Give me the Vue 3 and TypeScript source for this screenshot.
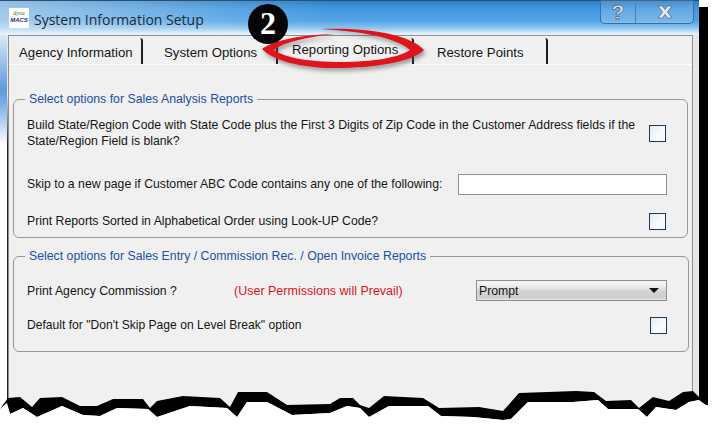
<template>
  <div class="page">
    <div class="screen">
      <div class="window">
        <!-- Title bar -->
        <header class="titlebar">
          <div class="logo">
            <span class="logo-top">dyna</span>
            <span class="logo-bottom">MACS</span>
          </div>
          <span class="title">System Information Setup</span>
          <div class="controls">
            <span class="ctrl ctrl-help">?</span>
            <span class="ctrl ctrl-close">
              <svg width="16" height="14" viewBox="0 0 16 14">
                <path
                  d="M1 1h4.500L8 4.600 10.500 1H15l-4.600 6L15 13h-4.500L8 9.400 5.500 13H1l4.600-6z"
                  fill="#dfe8ee"
                  stroke="#5b6f80"
                  stroke-width="0.8"
                />
              </svg>
            </span>
          </div>
        </header>

        <div class="body">
          <div class="frame-left"></div>
          <main class="panel">
            <!-- Tabs -->
            <nav class="tabs">
              <div
                v-for="tab in tabs"
                :key="tab.label"
                class="tab"
                :class="{ active: tab.active }"
                :style="{ width: tab.width + 'px', paddingLeft: tab.inset + 'px' }"
              >
                {{ tab.label }}
              </div>
            </nav>

            <div class="content">
              <fieldset class="group group-sales">
                <legend>Select options for Sales Analysis Reports</legend>
                <div class="row row-build">
                  <p>
                    Build State/Region Code with State Code plus the First 3 Digits of Zip Code in the Customer Address fields if the<br />
                    State/Region Field is blank?
                  </p>
                  <span class="check"></span>
                </div>
                <div class="row row-skip">
                  <p>Skip to a new page if Customer ABC Code contains any one of the following:</p>
                  <span class="text-input"></span>
                </div>
                <div class="row row-sorted">
                  <p>Print Reports Sorted in Alphabetical Order using Look-UP Code?</p>
                  <span class="check"></span>
                </div>
              </fieldset>

              <fieldset class="group group-entry">
                <legend>Select options for Sales Entry / Commission Rec. / Open Invoice Reports</legend>
                <div class="row row-commission">
                  <p class="commission-label">Print Agency Commission ?</p>
                  <p class="warning">(User Permissions will Prevail)</p>
                  <div class="select">
                    <span>Prompt</span>
                    <i class="caret"></i>
                  </div>
                </div>
                <div class="row row-break">
                  <p>Default for "Don't Skip Page on Level Break" option</p>
                  <span class="check"></span>
                </div>
              </fieldset>
            </div>
          </main>
          <div class="frame-right"></div>
        </div>
      </div>
      <div class="drop-strip"></div>
    </div>

    <!-- Callout drawn over the tabs -->
    <svg class="ink" width="716" height="80" viewBox="0 0 716 80">
      <path
        class="ring"
        d="M320 29C365 27 410 34 424 50C412 62 375 68 335 68C300 68 272 60 262 49C275 40 300 35 335 34C300 38 283 43 274 50C285 58 310 62 340 62C375 62 400 57 410 50C398 38 360 31 320 29Z"
        fill="#e0141c"
      />
      <circle cx="268" cy="24" r="20" fill="#060606" />
      <text x="268" y="34" text-anchor="middle" class="badge">2</text>
    </svg>

    <!-- Torn paper edge along the bottom -->
    <svg class="torn" width="716" height="435" viewBox="0 0 716 435">
      <polygon :points="tornBlack" fill="#000" />
      <polygon :points="tornWhite" fill="#fff" />
    </svg>
  </div>
</template>

<script setup lang="ts">
const tabs = [
  { label: "Agency Information", width: 134, inset: 10, active: false },
  { label: "System Options", width: 135, inset: 21, active: false },
  { label: "Reporting Options", width: 136, inset: 14, active: true },
  { label: "Restore Points", width: 134, inset: 23, active: false },
];

const upper =
  "8,398 20,397 32,407 40,398 62,397 80,406 97,406 113,399 143,399 150,408 157,401 183,396 220,398 230,407 238,392 267,392 287,405 330,404 340,398 353,398 360,405 369,408 384,396 423,398 439,408 479,407 503,411 519,393 576,391 594,392 606,401 631,400 639,408 653,397 669,401 683,392 693,391 699,397 708,397";
const lower =
  "708,405 706,405 699,400 689,402 676,410 656,407 647,417 638,409 608,409 598,400 573,402 528,402 511,419 503,420 473,417 441,416 428,406 389,406 369,417 360,408 347,406 330,413 292,415 267,402 247,402 237,417 227,408 190,406 157,417 148,409 117,408 100,416 83,415 62,406 37,417 23,408 10,414 7,403 0,409";

const tornBlack = `${upper} ${lower}`;
const tornWhite = `${lower} 0,435 716,435 716,405`;
</script>

<style>
html,
body {
  background: #fff;
}
</style>

<style scoped>
.page {
  position: relative;
  width: 716px;
  height: 435px;
  overflow: hidden;
  background: #fff;
  font-family: "Liberation Sans", Arial, sans-serif;
  color: #151515;
}

.screen {
  display: flex;
  align-items: flex-start;
  height: 435px;
}

.window {
  width: 699px;
  height: 430px;
  display: flex;
  flex-direction: column;
}

.drop-strip {
  width: 9px;
  height: 398px;
  margin-top: 7px;
  background: #000;
}

/* Title bar */
.titlebar {
  height: 35px;
  flex: none;
  display: flex;
  align-items: flex-start;
  border-top: 1px solid #24517a;
  box-sizing: border-box;
  background:
    linear-gradient(to right, rgba(235, 240, 245, 0.55) 0, rgba(235, 240, 245, 0.15) 230px, rgba(235, 240, 245, 0) 330px),
    linear-gradient(to bottom, #2f80c2 0, #4298e0 8px, #52a3e6 20px, #8cc6f0 27px, #e6f3fb 33px);
}

.logo {
  width: 20px;
  height: 20px;
  margin: 7px 0 0 9px;
  background: #fff;
  display: flex;
  flex-direction: column;
  align-items: center;
  font-style: italic;
  line-height: 7px;
}
.logo-top {
  margin-top: 2px;
  font-size: 6px;
  font-family: "Liberation Serif", serif;
  color: #2e7d32;
}
.logo-bottom {
  font-size: 6px;
  font-weight: 700;
  color: #1a2f8c;
}

.title {
  margin: 9px 0 0 5px;
  font-family: "Open Sans", sans-serif;
  font-size: 14px;
  line-height: 19px;
  color: #1a2a3a;
}

.controls {
  margin-left: auto;
  margin-right: 5px;
  width: 94px;
  height: 24px;
  margin-top: -1px;
  box-sizing: border-box;
  display: flex;
  border: 1px solid #3d6f9c;
  border-top: none;
  border-radius: 0 0 5px 5px;
  background: linear-gradient(to bottom, rgba(255, 255, 255, 0.12), rgba(255, 255, 255, 0.22));
}
.ctrl {
  display: flex;
  align-items: center;
  justify-content: center;
}
.ctrl-help {
  width: 34px;
  border-right: 1px solid #4f81ad;
  font-size: 21px;
  font-weight: 700;
  color: #e6edf2;
  -webkit-text-stroke: 0.8px #52687a;
}
.ctrl-close {
  flex: 1;
}

/* Window body */
.body {
  flex: 1;
  display: flex;
  min-height: 0;
}
.frame-left {
  width: 7px;
  border-right: 1px solid;
  border-image: linear-gradient(to bottom, #dfeaf4 60px, #222 110px) 1;
  background: linear-gradient(to bottom, #d9e9f6 0, #5f98dc 55px, #7fb0e6 70px, #ffffff 110px);
}
.frame-right {
  flex: 1;
  background: #e6e6e6;
}
.panel {
  width: 685px;
  box-sizing: border-box;
  border: 1px solid #8e8e8e;
  border-bottom: none;
  background: #f0f0f0;
  display: flex;
  flex-direction: column;
}

/* Tabs */
.tabs {
  height: 29px;
  flex: none;
  display: flex;
  box-sizing: border-box;
  border-bottom: 1px solid #fbfbfb;
}
.tab {
  height: 26px;
  margin-top: 2px;
  box-sizing: border-box;
  border-right: 2px solid #1d1d1d;
  border-top-right-radius: 3px;
  font-size: 13.2px;
  line-height: 29px;
  white-space: nowrap;
}
.tab.active {
  line-height: 24px;
}

/* Groups */
.content {
  padding: 0 4px;
}
.group {
  margin: 0;
  width: 675px;
  box-sizing: border-box;
  border: 1px solid #9a9a9a;
  border-radius: 6px;
  padding: 0 21px 0 13px;
}
.group-sales {
  height: 146px;
  margin-top: 27px;
  padding-top: 12px;
}
.group-entry {
  height: 103px;
  margin-top: 11px;
  padding-top: 17px;
}
.group legend {
  margin-left: -2px;
  padding: 0 4px;
  font-size: 12.3px;
  line-height: 14px;
  color: #1c4fa6;
}

.row {
  display: flex;
  align-items: center;
  justify-content: space-between;
  font-size: 12.25px;
  line-height: 16px;
}
.row p {
  margin: 0;
}
.row-build {
  height: 30px;
}
.row-skip {
  height: 22px;
  margin-top: 25px;
}
.row-sorted {
  height: 18px;
  margin-top: 17px;
}
.row-commission {
  height: 21px;
  justify-content: flex-start;
}
.row-break {
  height: 18px;
  margin-top: 15px;
  font-size: 12.1px;
}

.commission-label {
  width: 207px;
}
.warning {
  width: 242px;
  font-size: 12.5px;
  color: #d9161c;
}

.check {
  width: 17px;
  height: 17px;
  flex: none;
  box-sizing: border-box;
  border: 1px solid #1f3b55;
  background: linear-gradient(135deg, #e4e8ec, #fafcff 60%, #f2f4f7);
}
.text-input {
  width: 209px;
  height: 21px;
  flex: none;
  margin-right: -1px;
  box-sizing: border-box;
  border: 1px solid #8c9299;
  background: #fff;
}
.select {
  width: 191px;
  height: 21px;
  flex: none;
  box-sizing: border-box;
  border: 1px solid #8f8f8f;
  padding: 0 7px 0 2px;
  display: flex;
  align-items: center;
  justify-content: space-between;
  background: linear-gradient(to bottom, #f7f7f7 0, #ececec 30%, #d2d2d2 55%, #cfcfcf 85%, #e2e2e2 100%);
}
.caret {
  width: 0;
  height: 0;
  border-left: 5px solid transparent;
  border-right: 5px solid transparent;
  border-top: 5px solid #111;
}

/* Overlays */
.ink {
  position: absolute;
  left: 0;
  top: 0;
  pointer-events: none;
}
.ring {
  filter: drop-shadow(2px 3px 2px rgba(70, 70, 70, 0.5));
}
.badge {
  font-family: "Liberation Serif", serif;
  font-weight: 700;
  font-size: 32px;
  fill: #fff;
}
.torn {
  position: absolute;
  left: 0;
  top: 0;
  pointer-events: none;
}
</style>
